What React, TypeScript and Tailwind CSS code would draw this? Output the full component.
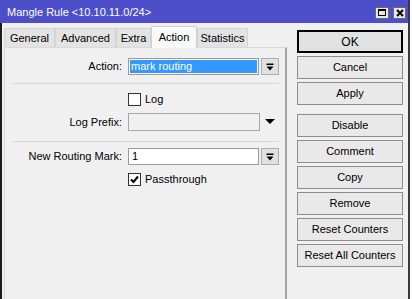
import React from 'react'

const tabs = [
  { name: 'General', w: 'w-[51px]' },
  { name: 'Advanced', w: 'w-[61px]' },
  { name: 'Extra', w: 'w-[35px]' },
  { name: 'Action', w: 'w-[46px]', active: true },
  { name: 'Statistics', w: 'w-[51px]' },
]

const buttons = ['Cancel', 'Apply']
const buttons2 = ['Disable', 'Comment', 'Copy', 'Remove', 'Reset Counters', 'Reset All Counters']

function DropIcon() {
  return (
    <svg width="8" height="8" viewBox="0 0 8 8">
      <rect x="0.5" y="0.5" width="7" height="1.5" fill="#000" />
      <path d="M0.5 3.5 H7.5 L4 7.5 Z" fill="#000" />
    </svg>
  )
}

function DropButton() {
  return (
    <div className="w-[18px] h-[17px] ml-[2px] flex items-center justify-center border border-[#adadad] bg-[#e1e1e1]">
      <DropIcon />
    </div>
  )
}

function Checkbox({ checked, label }: { checked?: boolean; label: string }) {
  return (
    <div className="flex items-center pl-[123px]">
      <div className="w-[13px] h-[13px] border border-[#333] bg-white flex items-center justify-center">
        {checked && (
          <svg width="11" height="11" viewBox="0 0 11 11">
            <path d="M2 5.5 L4.5 8 L9 2.5" stroke="#000" strokeWidth="2" fill="none" />
          </svg>
        )}
      </div>
      <span className="ml-[4px] text-[11px] text-black leading-none">{label}</span>
    </div>
  )
}

function Label({ text }: { text: string }) {
  return <div className="w-[117px] text-right text-[11px] text-black leading-none">{text}</div>
}

function Btn({ text, def }: { text: string; def?: boolean }) {
  return (
    <div
      className={
        def
          ? 'h-[23px] w-[106px] flex items-center justify-center border-2 border-black bg-[#e1e1e1] text-[12px] text-black'
          : 'h-[23px] w-[106px] flex items-center justify-center border border-[#8c8c8c] bg-[#e9e9e9] text-[11px] text-black'
      }
    >
      {text}
    </div>
  )
}

export default function App() {
  return (
    <div className="w-[412px] h-[299px] overflow-hidden bg-white flex font-['Liberation_Sans',Arial,sans-serif]">
      <div className="w-[410px] h-full flex flex-col border-r-2 border-[#3a3a3a] bg-[#f0f0f0]">
        {/* title bar */}
        <div className="h-[23px] bg-[#4c4fc9] flex items-center pl-[7px] pr-[2px] pt-[2px]">
          <span className="flex-1 text-white text-[11px]">Mangle Rule &lt;10.10.11.0/24&gt;</span>
          <div className="w-[14px] h-[12px] border border-[#6b6b6b] bg-[#e6e6e6] flex items-center justify-center">
            <div className="w-[8px] h-[7px] border border-black border-t-2" />
          </div>
          <div className="w-[13px] h-[12px] ml-[4px] border border-[#6b6b6b] bg-[#e6e6e6] flex items-center justify-center">
            <svg width="8" height="8" viewBox="0 0 8 8">
              <path d="M1 1 L7 7 M7 1 L1 7" stroke="#000" strokeWidth="2" />
            </svg>
          </div>
        </div>

        <div className="flex flex-1 border-l-2 border-[#1c1c1c]">
          {/* left: tabs + panel */}
          <div className="flex flex-col pl-[2px]">
            <div className="h-[24px] flex items-end">
              {tabs.map((t) =>
                t.active ? (
                  <div
                    key={t.name}
                    className={`${t.w} h-[22px] -mb-px relative z-10 border border-b-0 border-[#d0d0d0] bg-[#f9f9f9] flex items-center justify-center text-[11px] text-black`}
                  >
                    {t.name}
                  </div>
                ) : (
                  <div
                    key={t.name}
                    className={`${t.w} h-[19px] border border-b-0 border-[#d4d4d4] bg-[#e3e3e3] flex items-center justify-center text-[11px] text-black`}
                  >
                    {t.name}
                  </div>
                )
              )}
            </div>
            <div className="w-[283px] flex-1 border-t border-l border-[#d9d9d9] border-r-2 border-r-[#a3a3a3] bg-[#f0f0f0] flex flex-col">
              {/* Action */}
              <div className="flex items-center mt-[10px]">
                <Label text="Action:" />
                <div className="ml-[6px] w-[131px] h-[17px] border border-[#9a9a9a] bg-white p-px">
                  <div className="h-full bg-[#3399ff] text-white text-[11px] leading-[13px] pl-[1px]">mark routing</div>
                </div>
                <DropButton />
              </div>
              <div className="ml-[8px] mt-[8px] w-[266px] h-px bg-[#d6d6d6]" />

              {/* Log */}
              <div className="mt-[9px]">
                <Checkbox label="Log" />
              </div>
              <div className="flex items-center mt-[7px]">
                <Label text="Log Prefix:" />
                <div className="ml-[6px] w-[132px] h-[18px] border border-[#a8a8a8] bg-[#f0f0f0]" />
                <svg className="ml-[5px]" width="10" height="6" viewBox="0 0 10 6">
                  <path d="M0 0 H10 L5 5 Z" fill="#000" />
                </svg>
              </div>
              <div className="ml-[8px] mt-[10px] w-[266px] h-px bg-[#d6d6d6]" />

              {/* New Routing Mark */}
              <div className="flex items-center mt-[6px]">
                <Label text="New Routing Mark:" />
                <div className="ml-[6px] w-[131px] h-[17px] border border-[#9a9a9a] bg-white text-[11px] leading-[15px] pl-[3px] text-black">
                  1
                </div>
                <DropButton />
              </div>
              <div className="mt-[8px]">
                <Checkbox checked label="Passthrough" />
              </div>
            </div>
          </div>

          {/* right: buttons */}
          <div className="ml-[10px] pt-[7px] flex flex-col gap-[3px]">
            <Btn text="OK" def />
            {buttons.map((b) => (
              <Btn key={b} text={b} />
            ))}
            <div className="h-[3px]" />
            {buttons2.map((b) => (
              <Btn key={b} text={b} />
            ))}
          </div>
        </div>
      </div>
    </div>
  )
}
